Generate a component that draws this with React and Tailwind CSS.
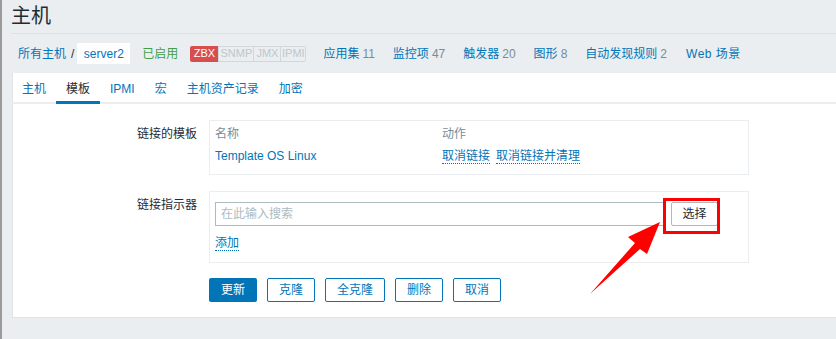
import React from 'react';

const font = { fontFamily: '"Liberation Sans", "Noto Sans CJK SC", sans-serif' };

const navLinks = [
    { name: '应用集', count: 11 },
    { name: '监控项', count: 47 },
    { name: '触发器', count: 20 },
    { name: '图形', count: 8 },
    { name: '自动发现规则', count: 2 },
];

const tabs = ['主机', '模板', 'IPMI', '宏', '主机资产记录', '加密'];

const App = () => {
    return (
        <div style={font} className="relative w-[836px] h-[339px] overflow-hidden bg-[#ebeef0] border-l-2 border-[#9a9a9a] text-[12px] text-[#1f2c33]">
            {/* page header */}
            <div className="ml-[9px] h-[34px] border-b border-[#dde2e5] flex items-center">
                <h1 className="text-[20px] leading-none font-normal text-[#1f2c33] -mt-[1px]">主机</h1>
            </div>

            {/* breadcrumbs + host nav */}
            <div className="h-[39px] flex items-center pl-[16px]">
                <a className="text-[#0275b8]">所有主机</a>
                <span className="ml-[5px] mr-[3px] text-[#1f2c33]">/</span>
                <span className="bg-white h-[21px] w-[53px] flex items-center justify-center text-[#0275b8]">server2</span>
                <span className="ml-[12px] text-[#429e47]">已启用</span>
                <div className="ml-[12px] flex items-center h-[16px] text-[11px] leading-none">
                    <span className="bg-[#d64e4e] text-white h-[16px] w-[28px] flex items-center justify-center rounded-l-[2px]">ZBX</span>
                    <span className="h-[16px] w-[36px] flex items-center justify-center border border-[#d0d8dc] text-[#bdc7cc]">SNMP</span>
                    <span className="h-[16px] w-[27px] flex items-center justify-center border border-l-0 border-[#d0d8dc] text-[#bdc7cc]">JMX</span>
                    <span className="h-[16px] w-[25px] flex items-center justify-center border border-l-0 border-[#d0d8dc] text-[#bdc7cc] rounded-r-[2px]">IPMI</span>
                </div>
                <div className="ml-[17px] flex items-center gap-[18px]">
                    {navLinks.map(l => (
                        <span key={l.name}>
                            <a className="text-[#0275b8]">{l.name}</a>
                            <span className="ml-[3px] text-[#768d99]">{l.count}</span>
                        </span>
                    ))}
                    <a className="ml-[1px] text-[#0275b8] tracking-[0.5px]">Web 场景</a>
                </div>
            </div>

            {/* main panel */}
            <div className="ml-[10px] h-[245px] bg-white border-l border-b border-[#dfe4e7]">
                <div className="h-[31px] flex border-b-2 border-[#ebeef0] -ml-[1px]">
                    {tabs.map(t => (
                        <div
                            key={t}
                            className={t === '模板'
                                ? 'px-[10px] flex items-center border-b-[3px] border-[#0275b8] text-[#1f2c33] -mb-[2px] pt-[4px]'
                                : 'px-[10px] flex items-center text-[#0275b8] pt-[3px]'}
                        >
                            {t}
                        </div>
                    ))}
                </div>

                <div className="pt-[16px]">
                    {/* linked templates */}
                    <div className="flex">
                        <div className="w-[196px] pr-[12px] text-right pt-[5px] text-[#1f2c33]">链接的模板</div>
                        <div className="w-[540px] h-[55px] border border-[#ebeef0] px-[5px] pt-[4px]">
                            <div className="flex text-[#768d99] h-[18px] items-center">
                                <span className="w-[227px]">名称</span>
                                <span>动作</span>
                            </div>
                            <div className="flex h-[24px] items-center pt-[2px]">
                                <a className="w-[227px] text-[#0275b8]">Template OS Linux</a>
                                <a className="text-[#0275b8] border-b border-dotted border-[#0275b8] leading-[14px]">取消链接</a>
                                <a className="ml-[6px] text-[#0275b8] border-b border-dotted border-[#0275b8] leading-[14px]">取消链接并清理</a>
                            </div>
                        </div>
                    </div>

                    {/* linked indicators */}
                    <div className="flex mt-[16px]">
                        <div className="w-[196px] pr-[12px] text-right pt-[5px] text-[#1f2c33]">链接指示器</div>
                        <div className="relative w-[540px] h-[72px] border border-[#ebeef0] px-[5px] pt-[10px]">
                            <div className="flex items-center">
                                <div className="w-[451px] h-[24px] border border-[#acbbc2] flex items-center px-[5px] text-[#acbbc2]">在此输入搜索</div>
                                <div className="ml-[5px] w-[47px] h-[24px] border border-[#acbbc2] rounded-[2px] flex items-center justify-center text-[#1f2c33]">选择</div>
                            </div>
                            <div className="mt-[8px]">
                                <a className="text-[#0275b8] border-b border-dotted border-[#0275b8] leading-[14px]">添加</a>
                            </div>
                            {/* annotation: red highlight */}
                            <div className="absolute left-[453px] top-[6px] w-[57px] h-[36px] border-[3px] border-[#ff0000]" />
                        </div>
                    </div>

                    {/* buttons */}
                    <div className="flex mt-[15px] pl-[196px] gap-[10px]">
                        <button className="h-[24px] w-[48px] bg-[#0275b8] text-white rounded-[2px]">更新</button>
                        <button className="h-[24px] w-[48px] border border-[#0275b8] text-[#0275b8] rounded-[2px]">克隆</button>
                        <button className="h-[24px] w-[60px] border border-[#0275b8] text-[#0275b8] rounded-[2px]">全克隆</button>
                        <button className="h-[24px] w-[48px] border border-[#0275b8] text-[#0275b8] rounded-[2px]">删除</button>
                        <button className="h-[24px] w-[48px] border border-[#0275b8] text-[#0275b8] rounded-[2px]">取消</button>
                    </div>
                </div>
            </div>

            {/* annotation: red arrow */}
            <svg className="absolute left-0 top-0 pointer-events-none" width="836" height="339">
                <polygon points="588,294 633,243 626,237 658,222 645,254 638,249" fill="#ff0000" />
            </svg>
        </div>
    );
};

export default App;
